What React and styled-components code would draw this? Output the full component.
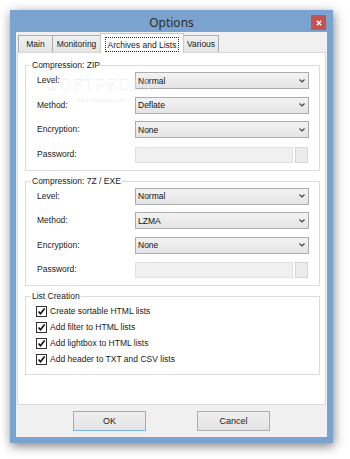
import React from 'react';
import styled, { createGlobalStyle } from 'styled-components';

const GlobalStyle = createGlobalStyle`
  body {
    margin: 0;
    background: #ffffff;
    font-family: 'Liberation Sans', Arial, sans-serif;
  }
`;

const Page = styled.div`
  width: 350px;
  height: 459px;
  box-sizing: border-box;
  padding: 10px 17px 16px 10px;
  background: #ffffff;
`;

const Window = styled.div`
  width: 323px;
  height: 433px;
  box-sizing: border-box;
  padding: 0 6px 6px;
  background: #7ba3d0;
  display: flex;
  flex-direction: column;
  box-shadow: 1px 3px 10px rgba(0, 0, 0, 0.5);
`;

const TitleBar = styled.div`
  height: 22px;
  display: grid;
  grid-template-columns: 1fr auto 1fr;
  align-items: center;
`;

const Title = styled.div`
  grid-column: 2;
  font-family: 'Noto Sans', 'Open Sans', sans-serif;
  font-size: 12px;
  color: #2b2b2b;
  padding-top: 2px;
`;

const CloseButton = styled.div`
  grid-column: 3;
  justify-self: end;
  align-self: start;
  margin: 5px 1px 0 0;
  width: 15px;
  height: 15px;
  background: #c75050;
  display: flex;
  align-items: center;
  justify-content: center;
`;

const Client = styled.div`
  flex: 1;
  background: #f0f0f0;
  padding: 3px 1px 0 1px;
  display: flex;
  flex-direction: column;
  font-size: 8.5px;
  color: #1a1a1a;
`;

const TabStrip = styled.div`
  height: 17px;
  display: flex;
  align-items: flex-end;
  padding-left: 1px;
`;

const Tab = styled.div`
  width: ${p => p.$w}px;
  height: ${p => (p.$active ? 20 : 17)}px;
  box-sizing: border-box;
  margin-left: -1px;
  margin-bottom: ${p => (p.$active ? -1 : 0)}px;
  border: 1px solid ${p => (p.$active ? '#c8c8c8' : '#acacac')};
  border-bottom: none;
  background: ${p => (p.$active ? '#ffffff' : 'linear-gradient(#f0f0f0, #e5e5e5)')};
  display: flex;
  align-items: center;
  justify-content: center;
  position: relative;
  z-index: ${p => (p.$active ? 2 : 1)};
  &:first-child {
    margin-left: 0;
  }
`;

const FocusLabel = styled.span`
  border: 1px dotted #333;
  padding: 2px 2px 1px;
  margin-top: 1px;
`;

const Panel = styled.div`
  flex: 1;
  background: #ffffff;
  border: 1px solid #d9d9d9;
  padding: 12px 5px 0 7px;
  display: flex;
  flex-direction: column;
  gap: 10px;
  position: relative;
`;

const Group = styled.div`
  border: 1px solid #dcdcdc;
  padding: 0 10px 7px 11px;
  display: flex;
  flex-direction: column;
`;

const GroupTitle = styled.div`
  align-self: flex-start;
  margin: -6px 0 1px -6px;
  padding: 0 1px;
  line-height: 11px;
  background: #ffffff;
`;

const Rows = styled.div`
  display: grid;
  grid-template-columns: 98px 1fr;
  grid-auto-rows: 17px;
  row-gap: 7.5px;
  align-items: center;
`;

const Label = styled.div`
  line-height: 17px;
`;

const Combo = styled.div`
  height: 17px;
  box-sizing: border-box;
  border: 1px solid #acacac;
  background: linear-gradient(#f3f3f3, #e4e4e4);
  display: flex;
  align-items: center;
  justify-content: space-between;
  padding: 0 3px 0 2px;
  color: #111;
`;

const PasswordRow = styled.div`
  display: flex;
  gap: 2px;
  height: 16px;
  align-self: end;
`;

const PasswordField = styled.div`
  flex: 1;
  border: 1px solid #e0e0e0;
  background: #f0f0f0;
`;

const PasswordButton = styled.div`
  width: 11px;
  border: 1px solid #d6d6d6;
  background: #ececec;
  margin-right: 1px;
`;

const CheckList = styled.div`
  display: flex;
  flex-direction: column;
  margin-left: -1px;
`;

const CheckRow = styled.div`
  height: 16px;
  display: flex;
  align-items: center;
  gap: 3px;
`;

const Box = styled.div`
  width: 11px;
  height: 11px;
  box-sizing: border-box;
  border: 1px solid #333333;
  background: #ffffff;
  display: flex;
  align-items: center;
  justify-content: center;
`;

const Footer = styled.div`
  height: 32px;
  box-sizing: border-box;
  padding: 6px 0;
  display: flex;
  justify-content: center;
  gap: 51px;
`;

const Button = styled.div`
  width: 73px;
  height: 20px;
  box-sizing: border-box;
  border: 1px solid ${p => (p.$default ? '#7eb4ea' : '#adadad')};
  background: linear-gradient(#efefef, #e3e3e3);
  display: flex;
  align-items: center;
  justify-content: center;
  font-size: 9px;
  color: #1a1a1a;
`;

const Watermark = styled.div`
  position: absolute;
  left: 30px;
  top: 22px;
  display: flex;
  flex-direction: column;
  align-items: center;
  pointer-events: none;
`;

const WatermarkBig = styled.div`
  font-family: 'Liberation Serif', serif;
  font-size: 17px;
  letter-spacing: 1.5px;
  color: rgba(255, 255, 255, 0.5);
  -webkit-text-stroke: 0.5px rgba(0, 0, 0, 0.1);
`;

const WatermarkSmall = styled.div`
  font-family: 'Liberation Serif', serif;
  font-size: 6px;
  margin-top: 2px;
  color: rgba(0, 0, 0, 0.12);
`;

const Chevron = () => (
  <svg width="6" height="4" viewBox="0 0 6 4">
    <path d="M0.5 0.5 L3 3 L5.5 0.5" fill="none" stroke="#444" strokeWidth="1.2" />
  </svg>
);

const Check = () => (
  <svg width="9" height="9" viewBox="0 0 9 9">
    <path d="M1.5 4.5 L3.5 6.8 L7.6 1.6" fill="none" stroke="#111" strokeWidth="1.6" />
  </svg>
);

const SelectBox = ({ value }) => (
  <Combo>
    <span>{value}</span>
    <Chevron />
  </Combo>
);

const CompressionGroup = ({ title, level, method, encryption }) => (
  <Group>
    <GroupTitle>{title}</GroupTitle>
    <Rows>
      <Label>Level:</Label>
      <SelectBox value={level} />
      <Label>Method:</Label>
      <SelectBox value={method} />
      <Label>Encryption:</Label>
      <SelectBox value={encryption} />
      <Label>Password:</Label>
      <PasswordRow>
        <PasswordField />
        <PasswordButton />
      </PasswordRow>
    </Rows>
  </Group>
);

const tabs = [
  { name: 'Main', w: 35 },
  { name: 'Monitoring', w: 49 },
  { name: 'Archives and Lists', w: 84, active: true },
  { name: 'Various', w: 36 },
];

const listOptions = [
  'Create sortable HTML lists',
  'Add filter to HTML lists',
  'Add lightbox to HTML lists',
  'Add header to TXT and CSV lists',
];

const App = () => {
  return (
    <Page>
      <GlobalStyle />
      <Window>
        <TitleBar>
          <Title>Options</Title>
          <CloseButton>
            <svg width="6" height="6" viewBox="0 0 6 6">
              <path d="M0.8 0.8 L5.2 5.2 M5.2 0.8 L0.8 5.2" stroke="#fff" strokeWidth="1.4" />
            </svg>
          </CloseButton>
        </TitleBar>
        <Client>
          <TabStrip>
            {tabs.map(t => (
              <Tab key={t.name} $w={t.w} $active={t.active}>
                {t.active ? <FocusLabel>{t.name}</FocusLabel> : t.name}
              </Tab>
            ))}
          </TabStrip>
          <Panel>
            <CompressionGroup title="Compression: ZIP" level="Normal" method="Deflate" encryption="None" />
            <CompressionGroup title="Compression: 7Z / EXE" level="Normal" method="LZMA" encryption="None" />
            <Group>
              <GroupTitle>List Creation</GroupTitle>
              <CheckList>
                {listOptions.map(o => (
                  <CheckRow key={o}>
                    <Box><Check /></Box>
                    <span>{o}</span>
                  </CheckRow>
                ))}
              </CheckList>
            </Group>
            <Watermark>
              <WatermarkBig>SOFTPEDIA</WatermarkBig>
              <WatermarkSmall>www.softpedia.com</WatermarkSmall>
            </Watermark>
          </Panel>
          <Footer>
            <Button $default>OK</Button>
            <Button>Cancel</Button>
          </Footer>
        </Client>
      </Window>
    </Page>
  );
};

export default App;
